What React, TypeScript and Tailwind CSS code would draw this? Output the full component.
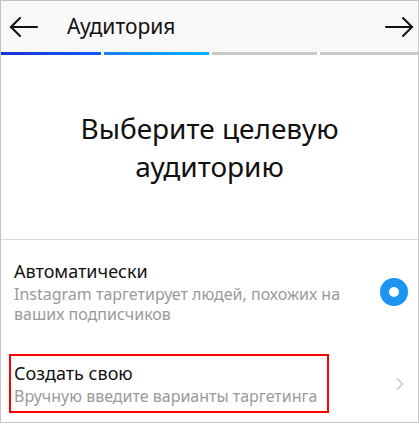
import { ChevronRight } from "lucide-react"

const font = { fontFamily: '"Noto Sans", "Open Sans", sans-serif' }

// Thin back/forward arrows used in the header
const Arrow = ({ dir }: { dir: "left" | "right" }) => (
	<svg width="30" height="24" viewBox="0 0 30 24" fill="none" stroke="#111" strokeWidth="2" strokeLinecap="round">
		{dir === "left" ? (
			<>
				<path d="M2 12h26" />
				<path d="M11 3 2 12l9 9" />
			</>
		) : (
			<>
				<path d="M2 12h26" />
				<path d="M19 3l9 9-9 9" />
			</>
		)}
	</svg>
)

export default function App() {
	return (
		<div className="h-[425px] w-[419px] overflow-hidden bg-white" style={font}>
			<div className="flex h-[423px] flex-col border border-[#c4c4c4]">
				{/* Header */}
				<header className="flex h-[51px] items-center bg-[#f8f8f8] pl-[8px] pr-[4px]">
					<Arrow dir="left" />
					<span className="ml-[28px] text-[21px] text-[#111]">Аудитория</span>
					<div className="ml-auto">
						<Arrow dir="right" />
					</div>
				</header>

				{/* Step progress */}
				<div className="flex h-[3px] gap-[3px] bg-white">
					<div className="w-[100px] bg-gradient-to-r from-[#1a2fd8] to-[#0b5ef2]" />
					<div className="w-[105px] bg-gradient-to-r from-[#1b7cf0] to-[#00b2ff]" />
					<div className="w-[105px] bg-[#c8c8c8]" />
					<div className="flex-1 bg-[#c8c8c8]" />
				</div>

				{/* Heading */}
				<div className="flex h-[184px] items-center justify-center text-center">
					<h1 className="text-[28px] leading-[38px] text-[#111]">
						Выберите целевую
						<br />
						аудиторию
					</h1>
				</div>

				<div className="h-px bg-[#dcdcdc]" />

				{/* Automatic option */}
				<div className="flex items-center pl-[13px] pr-[10px] pt-[19px]">
					<div className="flex-1">
						<div className="text-[18px] leading-[24px] text-[#111]">Автоматически</div>
						<div className="mt-[1px] text-[16px] leading-[20px] text-[#9a9a9a]">
							Instagram таргетирует людей, похожих на
							<br />
							ваших подписчиков
						</div>
					</div>
					<div className="flex h-[28px] w-[28px] items-center justify-center rounded-full bg-[#1b95f1]">
						<div className="h-[10px] w-[10px] rounded-full bg-white" />
					</div>
				</div>

				{/* Custom option */}
				<div className="mt-[30px] flex items-center pl-[8px] pr-[8px]">
					<div className="w-[320px] border-2 border-[#f00] px-[3px] pb-[4px] pt-[5px]">
						<div className="text-[18px] leading-[24px] text-[#111]">Создать свою</div>
						<div className="mt-[1px] text-[16px] leading-[21px] text-[#9a9a9a]">
							Вручную введите варианты таргетинга
						</div>
					</div>
					<ChevronRight className="ml-auto text-[#c8c8c8]" size={20} strokeWidth={2} />
				</div>
			</div>
		</div>
	)
}
